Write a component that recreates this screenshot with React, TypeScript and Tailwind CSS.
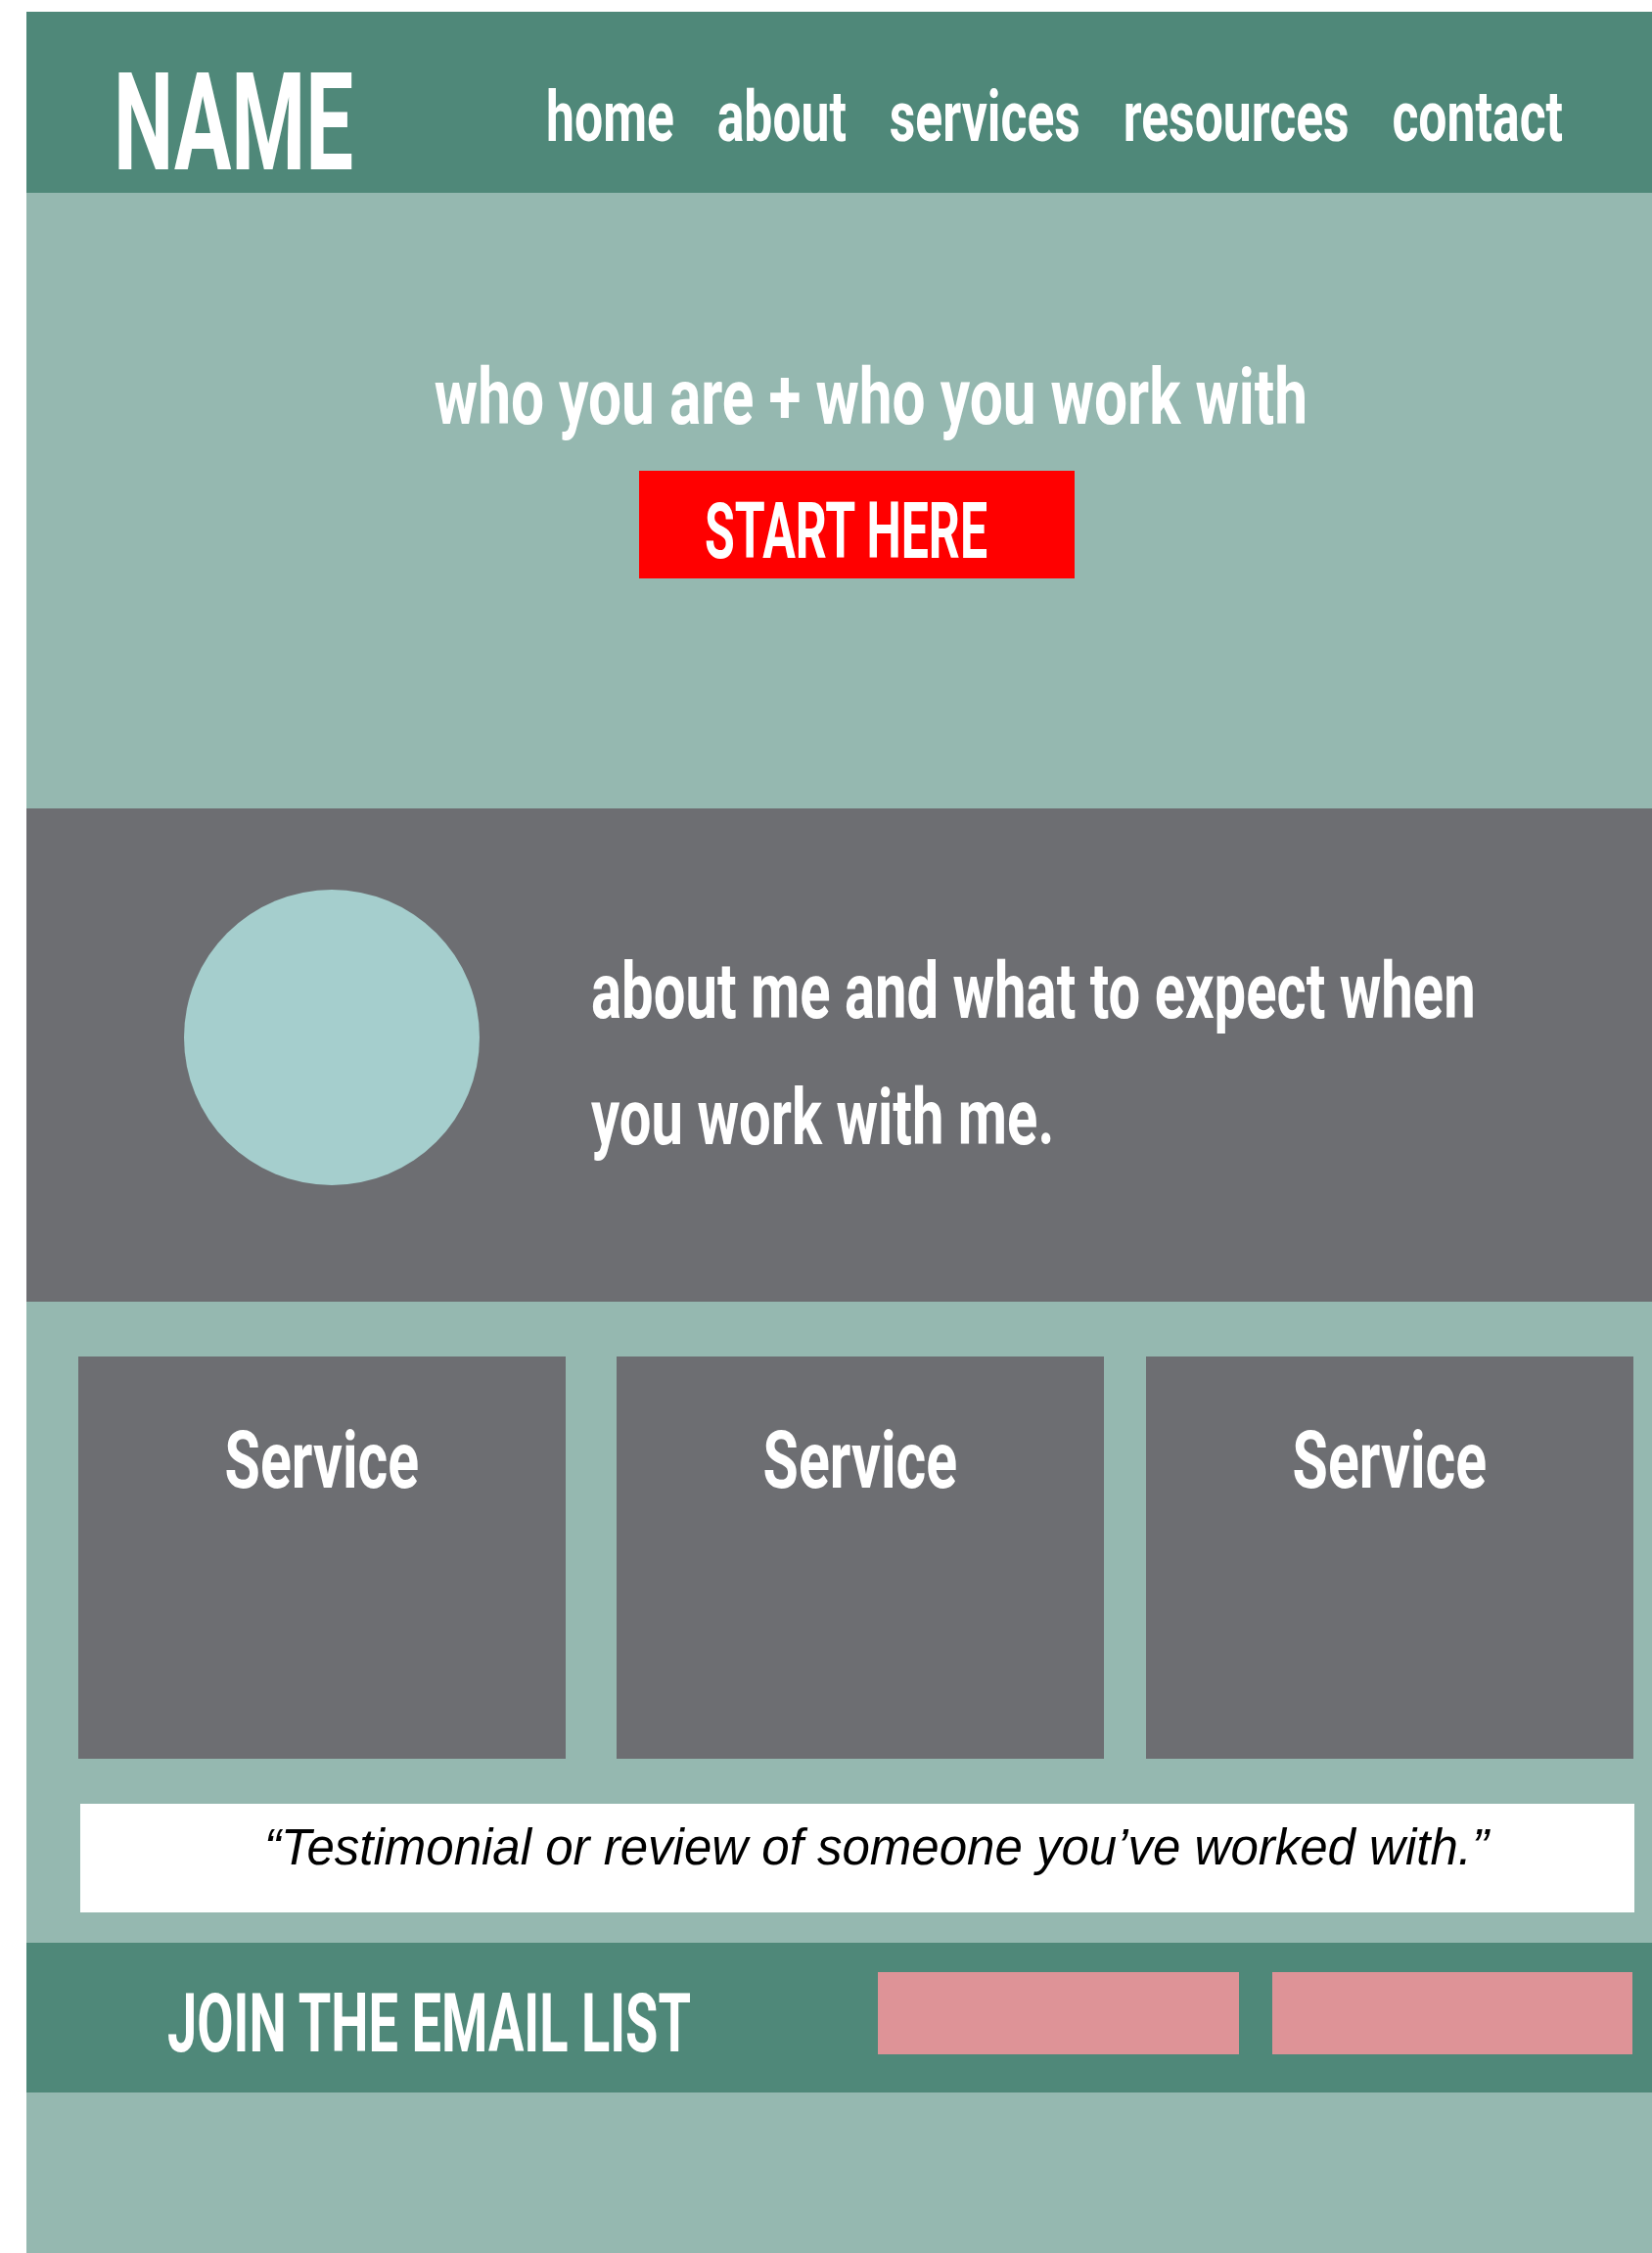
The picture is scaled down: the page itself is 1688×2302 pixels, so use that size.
const din = "font-['Roboto','Liberation_Sans',sans-serif] font-bold text-white whitespace-nowrap";

const navItems = ["home", "about", "services", "resources", "contact"];

function ServiceCard({ className }: { className: string }) {
  return (
    <div className={`h-[411px] w-[498px] bg-[#6d6e72] pt-[65px] flex justify-center ${className}`}>
      <span className={`${din} inline-block origin-center scale-x-[0.72] text-[82px] leading-none`}>Service</span>
    </div>
  );
}

export default function App() {
  return (
    <div className="min-h-[2302px] overflow-hidden bg-white pt-[12px] pl-[27px]">
      {/* top bar: name + navigation */}
      <header className="flex h-[185px] bg-[#4f8879]">
        <div className="w-[531px] shrink-0 pl-[89px] pt-[45px]">
          <span className={`${din} inline-block origin-left scale-x-[0.62] text-[140px] leading-[0.98]`}>NAME</span>
        </div>
        <nav className="pt-[72px]">
          <ul className="flex origin-left scale-x-[0.718] gap-[61px]">
            {navItems.map((item) => (
              <li key={item} className={`${din} text-[72px] leading-none`}>
                {item}
              </li>
            ))}
          </ul>
        </nav>
      </header>

      {/* hero */}
      <section className="h-[629px] bg-[#95b8b0] pt-[169px]">
        <div className="flex justify-center pl-[64px]">
          <h1 className={`${din} inline-block origin-center scale-x-[0.755] text-[80px] leading-none`}>
            who you are + who you work with
          </h1>
        </div>
        <div className="mt-[35px] flex justify-center pl-[36px]">
          <button className="h-[110px] w-[445px] bg-[#ff0000] pl-[67px] pt-[13px] text-left">
            <span className={`${din} inline-block origin-left scale-x-[0.625] text-[80px] leading-none`}>START HERE</span>
          </button>
        </div>
      </section>

      {/* about */}
      <section className="flex h-[504px] bg-[#6d6e72]">
        <div className="ml-[161px] mt-[83px] h-[302px] w-[302px] shrink-0 rounded-full bg-[#a5cecd]" />
        <p className={`${din} ml-[114px] mt-[123px] origin-left scale-x-[0.725] text-[80px] leading-[129px]`}>
          about me and what to expect when
          <br />
          you work with me.
        </p>
      </section>

      {/* services + testimonial */}
      <section className="h-[655px] bg-[#95b8b0] pt-[56px]">
        <div className="flex">
          <ServiceCard className="ml-[53px]" />
          <ServiceCard className="ml-[52px]" />
          <ServiceCard className="ml-[43px] w-[497px]" />
        </div>
        <div className="ml-[55px] mt-[46px] h-[111px] w-[1588px] bg-white pl-[188px] pt-[19px]">
          <p className="whitespace-nowrap font-['Liberation_Sans',Arial,sans-serif] text-[51px] italic leading-none text-black">
            “Testimonial or review of someone you’ve worked with.”
          </p>
        </div>
      </section>

      {/* newsletter */}
      <section className="flex h-[153px] bg-[#4f8879]">
        <div className="w-[870px] shrink-0 pl-[144px] pt-[41px]">
          <span className={`${din} inline-block origin-left scale-x-[0.645] text-[84px] leading-none`}>JOIN THE EMAIL LIST</span>
        </div>
        <div className="mt-[30px] h-[84px] w-[369px] bg-[#de9397]" />
        <div className="ml-[34px] mt-[30px] h-[84px] w-[368px] bg-[#de9397]" />
      </section>

      <section className="h-[164px] bg-[#95b8b0]" />
    </div>
  );
}
